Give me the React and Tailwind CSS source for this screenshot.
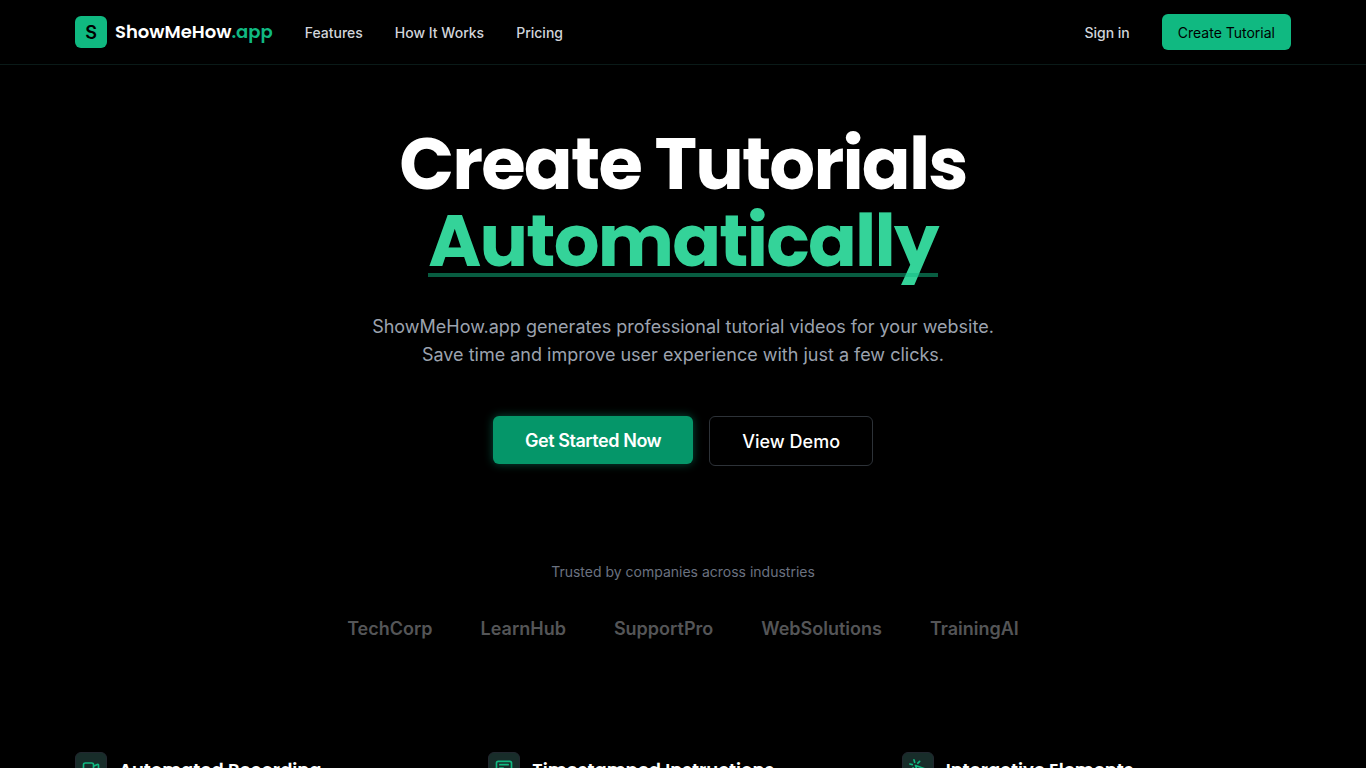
import React from 'react';
import { HiOutlineAnnotation, HiOutlineCursorClick, HiOutlineVideoCamera } from 'react-icons/hi';

const navLinks = ['Features', 'How It Works', 'Pricing'];

const companies = ['TechCorp', 'LearnHub', 'SupportPro', 'WebSolutions', 'TrainingAI'];

const features = [
  { title: 'Automated Recording', Icon: HiOutlineVideoCamera },
  { title: 'Timestamped Instructions', Icon: HiOutlineAnnotation },
  { title: 'Interactive Elements', Icon: HiOutlineCursorClick },
];

const Header = () => {
  return (
    <header className="border-b border-[#0a1a18]">
      <div className="mx-auto flex h-16 max-w-[1216px] items-center justify-between">
        <div className="flex items-center gap-8">
          <a href="#" className="flex items-center gap-2">
            <span className="flex size-8 items-center justify-center rounded-md bg-[#10b981] pt-0.5 text-lg font-semibold text-black">
              S
            </span>
            <span className="font-['Poppins','Inter',sans-serif] text-lg font-semibold text-white">
              ShowMeHow<span className="text-[#10b981]">.app</span>
            </span>
          </a>
          <nav className="flex items-center gap-8 pt-0.5 text-sm font-medium text-[#d1d5db]">
            {navLinks.map((link) => (
              <a key={link} href="#" className="hover:text-white">{link}</a>
            ))}
          </nav>
        </div>
        <div className="flex items-center gap-8 text-sm">
          <a href="#" className="pt-0.5 font-medium text-[#d1d5db] hover:text-white">Sign in</a>
          <button className="h-9 rounded-md bg-[#10b981] px-4 pt-0.5 text-black">Create Tutorial</button>
        </div>
      </div>
    </header>
  );
};

const Hero = () => {
  return (
    <section className="flex flex-col items-center pt-[60px] text-center">
      <h1 className="font-['Poppins','Inter',sans-serif] text-[72px] leading-[77px] font-bold tracking-tight text-white">
        Create Tutorials
        <br />
        <span className="relative inline-block text-[#34d399]">
          Automatically
          <span className="absolute inset-x-0 bottom-0.5 h-1 bg-[#10b981]/50" />
        </span>
      </h1>
      <p className="mt-[34px] max-w-2xl text-lg leading-7 text-[#9ca3af]">
        ShowMeHow.app generates professional tutorial videos for your website.
        <br />
        Save time and improve user experience with just a few clicks.
      </p>
      <div className="mt-[47px] flex items-start gap-4 text-lg text-white">
        <button className="h-12 rounded-md bg-[#059669] px-8 pt-0.5 font-semibold tracking-tight shadow-[0_0_10px_#064e3b]">
          Get Started Now
        </button>
        <button className="h-[50px] rounded-md border border-[#2d3238] px-8 pt-0.5 font-medium">View Demo</button>
      </div>
    </section>
  );
};

const Companies = () => {
  return (
    <section className="mt-24 flex flex-col items-center">
      <p className="text-sm text-[#6b7280]">Trusted by companies across industries</p>
      <ul className="mt-[33px] flex items-center gap-12 text-lg font-semibold text-[#545557]">
        {companies.map((name) => (
          <li key={name}>{name}</li>
        ))}
      </ul>
    </section>
  );
};

const Features = () => {
  return (
    <section className="mx-auto mt-[109px] grid max-w-[1216px] grid-cols-3 gap-6">
      {features.map(({ title, Icon }) => (
        <div key={title} className="flex items-start gap-3">
          <span className="flex size-8 items-center justify-center rounded-md border border-[#22272f] bg-[#182d2a]">
            <Icon className="size-5 text-[#10b981]" aria-hidden="true" />
          </span>
          <h3 className="font-['Poppins','Inter',sans-serif] text-lg leading-9 font-semibold text-white">{title}</h3>
        </div>
      ))}
    </section>
  );
};

export default function App() {
  return (
    <div className="min-h-screen bg-black font-['Inter',sans-serif]">
      <Header />
      <main>
        <Hero />
        <Companies />
        <Features />
      </main>
    </div>
  );
}
